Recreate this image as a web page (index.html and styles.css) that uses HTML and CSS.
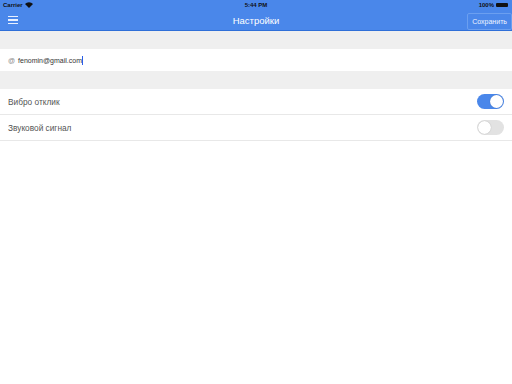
FILE: index.html
```html
<!DOCTYPE html>
<html lang="ru">
<head>
    <meta charset="UTF-8" />
    <title>Настройки</title>
    <link rel="stylesheet" href="styles.css">
</head>
<body>
<div class="top">
    <div class="status">
        <div class="status-left">Carrier
            <svg width="8" height="6" viewBox="0 0 8 6"><path d="M0 2 A5.5 5.5 0 0 1 8 2 L4 6 Z" fill="#111"/></svg>
        </div>
        <div class="status-mid">5:44 PM</div>
        <div class="status-right">100% <span class="battery"></span></div>
    </div>
    <div class="nav">
        <div class="burger"><span></span><span></span><span></span></div>
        <div class="title">Настройки</div>
        <button class="save" type="button">Сохранить</button>
    </div>
</div>

<div class="gap"></div>
<div class="row email">
    <span class="at">@</span>
    <span class="mail">fenomin@gmail.com</span><span class="caret"></span>
</div>
<div class="gap"></div>

<div class="row">
    <span class="label">Вибро отклик</span>
    <span class="toggle on"></span>
</div>
<div class="row">
    <span class="label">Звуковой сигнал</span>
    <span class="toggle"></span>
</div>
</body>
</html>
```

FILE: styles.css
```css
body {
    margin: 0;
    font-family: "Liberation Sans", Arial, sans-serif;
    background: #fff;
    width: 512px;
    height: 384px;
    overflow: hidden;
}
.top {
    background: #4a87ea;
    border-bottom: 1px solid #2f6fd8;
    height: 30px;
}
.status {
    height: 10px;
    display: flex;
    align-items: center;
    justify-content: space-between;
    padding: 0 3px;
    font-size: 6px;
    font-weight: bold;
    color: #111;
}
.status-left, .status-right {
    width: 80px;
    display: flex;
    align-items: center;
    gap: 2px;
}
.status-right {
    justify-content: flex-end;
}
.battery {
    display: inline-block;
    width: 12px;
    height: 4px;
    background: #111;
    border-radius: 1px;
    margin-right: 1px;
}
.nav {
    height: 20px;
    display: flex;
    align-items: center;
    justify-content: space-between;
    position: relative;
}
.burger {
    margin-left: 8px;
    width: 10px;
    display: flex;
    flex-direction: column;
    gap: 2px;
}
.burger span {
    height: 1.5px;
    background: #e8f0ff;
}
.title {
    position: absolute;
    left: 0;
    right: 0;
    text-align: center;
    color: #fff;
    font-size: 9.5px;
    pointer-events: none;
}
.save {
    margin-top: 3px;
    height: 17px;
    padding: 0 4px;
    background: #4a87ea;
    border: 1px solid #6b9ff0;
    border-radius: 2px;
    color: #eef4ff;
    font-family: "Liberation Sans", Arial, sans-serif;
    font-size: 7px;
    position: relative;
    z-index: 1;
    align-self: flex-start;
}
.gap {
    height: 18px;
    background: #efefef;
}
.row {
    height: 25px;
    display: flex;
    align-items: center;
    justify-content: space-between;
    padding: 0 8px;
    border-bottom: 1px solid #e8e8e8;
}
.row.email {
    height: 22px;
    justify-content: flex-start;
    border-bottom: none;
    font-size: 7px;
}
.at {
    color: #888;
    margin-right: 3px;
}
.mail {
    color: #333;
}
.caret {
    display: inline-block;
    width: 1px;
    height: 9px;
    background: #2a5ee8;
}
.label {
    font-size: 8.3px;
    color: #555;
}
.toggle {
    width: 27px;
    height: 15px;
    border-radius: 8px;
    background: #e2e2e2;
    position: relative;
}
.toggle::after {
    content: "";
    position: absolute;
    top: 1px;
    left: 1px;
    width: 13px;
    height: 13px;
    border-radius: 50%;
    background: #fff;
    box-shadow: 0 0 1px rgba(0,0,0,0.3);
}
.toggle.on {
    background: #4a87ea;
}
.toggle.on::after {
    left: 13px;
}
```
